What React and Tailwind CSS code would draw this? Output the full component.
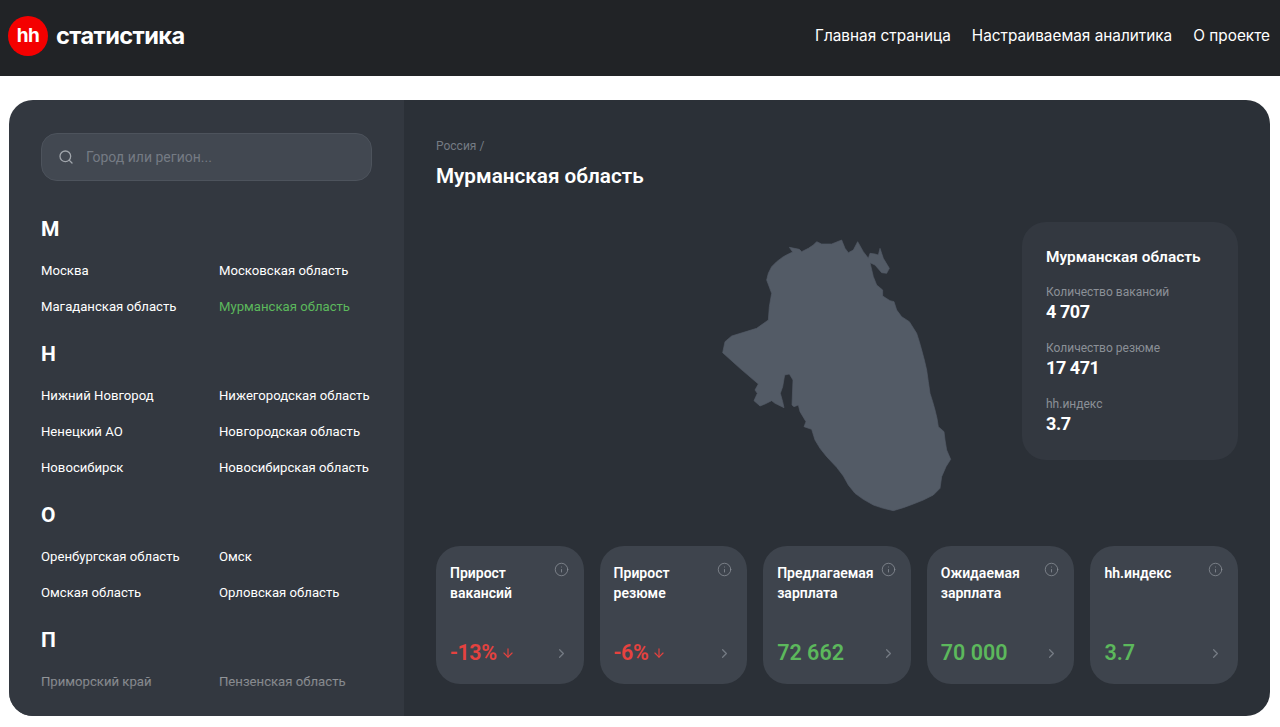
import React from "react";
import { ArrowDown, ChevronRight, Info, Search } from "lucide-react";

const regions = [
  { letter: "М", items: [["Москва"], ["Московская область"], ["Магаданская область"], ["Мурманская область", true]] },
  { letter: "Н", items: [["Нижний Новгород"], ["Нижегородская область"], ["Ненецкий АО"], ["Новгородская область"], ["Новосибирск"], ["Новосибирская область"]] },
  { letter: "О", items: [["Оренбургская область"], ["Омск"], ["Омская область"], ["Орловская область"]] },
  { letter: "П", items: [["Приморский край"], ["Пензенская область"]] },
];

const metrics = [
  { title: "Прирост вакансий", value: "-13%", down: true },
  { title: "Прирост резюме", value: "-6%", down: true },
  { title: "Предлагаемая зарплата", value: "72 662" },
  { title: "Ожидаемая зарплата", value: "70 000" },
  { title: "hh.индекс", value: "3.7" },
];

const stats = [
  ["Количество вакансий", "4 707"],
  ["Количество резюме", "17 471"],
  ["hh.индекс", "3.7"],
];

const MAP_POINTS =
  "268,52 298,58 305,65 325,55 340,45 350,35 365,42 395,42 425,30 435,55 445,68 460,60 473,35 490,65 505,85 510,70 525,72 535,75 540,55 550,85 568,115 560,130 545,128 525,105 510,98 520,140 530,165 548,180 548,198 570,212 582,215 590,240 605,260 628,275 650,310 658,335 665,360 673,390 680,420 685,455 690,490 698,515 705,540 711,565 715,590 732,605 735,630 740,660 752,688 738,710 725,740 720,775 700,795 670,810 640,822 610,833 580,842 550,835 520,825 490,808 465,790 445,765 430,738 410,712 380,680 360,655 345,630 335,598 312,590 318,575 300,545 295,525 282,530 276,525 279,450 268,432 254,435 248,470 241,490 248,515 252,533 225,520 215,512 195,522 180,528 162,512 172,490 165,480 175,462 120,415 68,368 75,335 95,318 170,295 205,270 208,230 215,190 200,150 205,130 215,110 230,95 250,80 265,72 278,66";

const Header = () => (
  <header className="h-[76px] bg-[#212326] flex items-center justify-between pl-2 pr-2.5 pb-1">
    <div className="flex items-center gap-2">
      <div className="w-10 h-10 rounded-full bg-[#f40000] flex items-center justify-center text-white font-bold text-[19px] tracking-tight">
        hh
      </div>
      <span className="text-white font-bold text-[23.6px] tracking-tight">статистика</span>
    </div>
    <nav className="flex items-center gap-[21px] text-white text-[15.35px]">
      <span>Главная страница</span>
      <span>Настраиваемая аналитика</span>
      <span>О проекте</span>
    </nav>
  </header>
);

const Sidebar = () => (
  <aside
    className="relative w-[395px] shrink-0 bg-[#333840] px-8 pt-[33px] overflow-hidden"
    style={{ fontFamily: "Roboto, sans-serif" }}
  >
    <div className="h-12 w-[331px] rounded-2xl bg-[#424851] border border-[#4d535c] flex items-center pl-4 gap-3">
      <Search size={16} className="text-[#a0a5ab]" />
      <span className="text-[14px] text-[#757b84]">Город или регион...</span>
    </div>
    <div className="mt-[34px]">
      {regions.map((group) => (
        <section key={group.letter} className="mb-[15px]">
          <h3 className="text-white text-[21px] font-bold leading-[28px]">{group.letter}</h3>
          <div className="grid grid-cols-[178px_1fr] mt-[10px]">
            {group.items.map(([name, active]) => (
              <div
                key={name}
                className={`h-9 flex items-center text-[13.15px] ${active ? "text-[#5cb85c]" : "text-white"}`}
              >
                {name}
              </div>
            ))}
          </div>
        </section>
      ))}
    </div>
    <div className="absolute left-0 right-0 bottom-0 h-[66px] bg-gradient-to-b from-[#333840]/20 to-[#333840]" />
  </aside>
);

const MetricCard = ({ title, value, down }) => {
  const color = down ? "text-[#e5423f] tracking-tight" : "text-[#5cb85c]";
  return (
    <div className="flex-1 h-[138px] rounded-3xl bg-[#3e444d] pl-3.5 pr-[15px] pt-[17px] pb-[15px] flex flex-col justify-between">
      <div className="flex justify-between items-start">
        <div className="text-white text-[14px] font-semibold leading-5">{title}</div>
        <Info size={15} strokeWidth={1.25} className="text-[#8b9097] shrink-0 -mt-px" />
      </div>
      <div className="flex items-center justify-between">
        <div className={`flex items-center gap-1 ${color}`}>
          <span className="text-[21.5px] font-semibold leading-8">{value}</span>
          {down && <ArrowDown size={14} />}
        </div>
        <ChevronRight size={15} className="text-[#757b84]" />
      </div>
    </div>
  );
};

const StatsCard = () => (
  <div className="w-[216px] h-[238px] rounded-3xl bg-[#333840] px-6 pt-6">
    <div className="text-white text-[15.4px] font-semibold leading-[22px]">Мурманская область</div>
    <div className="mt-4 flex flex-col gap-4">
      {stats.map(([label, value]) => (
        <div key={label}>
          <div className="text-[#8b9097] text-[12px] leading-4">{label}</div>
          <div className="text-white text-[18px] font-bold leading-[24px] tracking-tight">{value}</div>
        </div>
      ))}
    </div>
  </div>
);

const Main = () => (
  <main className="flex-1 bg-[#2b3037] px-8 pt-[38px]" style={{ fontFamily: "Roboto, sans-serif" }}>
    <div className="text-[#757b84] text-[12px] leading-4">Россия /</div>
    <h1 className="text-white text-[20.7px] font-semibold leading-7 mt-2">Мурманская область</h1>
    <div className="h-[324px] mt-[32px] flex justify-end items-start">
      <svg width="270" height="290" viewBox="0 0 810 870" className="mt-2 mr-[52px]">
        <polygon points={MAP_POINTS} fill="#535b66" stroke="#535b66" strokeWidth="2" strokeLinejoin="round" />
      </svg>
      <StatsCard />
    </div>
    <div className="flex gap-4">
      {metrics.map((m) => (
        <MetricCard key={m.title} {...m} />
      ))}
    </div>
  </main>
);

export default function App() {
  return (
    <div className="h-[727px] overflow-hidden bg-white" style={{ fontFamily: '"Inter", "Noto Sans", sans-serif' }}>
      <Header />
      <div className="pt-6 pl-[9px] pr-2.5">
        <div className="h-[616px] rounded-3xl overflow-hidden flex">
          <Sidebar />
          <Main />
        </div>
      </div>
    </div>
  );
}
